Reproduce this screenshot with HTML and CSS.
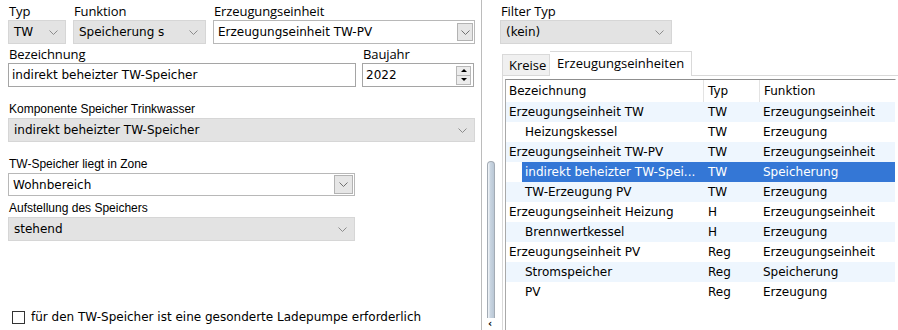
FILE: index.html
```html
<!DOCTYPE html>
<html>
	<head>
		<meta charset="utf-8">
		<title>Speicher</title>
		<link rel="stylesheet" href="styles.css">
	</head>
	<body>
	  <div class="app">
	    <div class="left">
	      <div class="row">
	        <div class="field w-typ">
	          <div class="lbl">Typ</div>
	          <div class="combo ro">TW<svg class="chev" width="9" height="5"><path d="M0.5 0.5 L4.5 4.5 L8.5 0.5"/></svg></div>
	        </div>
	        <div class="field w-funk">
	          <div class="lbl">Funktion</div>
	          <div class="combo ro">Speicherung s<svg class="chev" width="9" height="5"><path d="M0.5 0.5 L4.5 4.5 L8.5 0.5"/></svg></div>
	        </div>
	        <div class="field w-erz">
	          <div class="lbl">Erzeugungseinheit</div>
	          <div class="combo wb">Erzeugungseinheit TW-PV<span class="btn"><svg class="chev" width="9" height="5"><path d="M0.5 0.5 L4.5 4.5 L8.5 0.5"/></svg></span></div>
	        </div>
	      </div>

	      <div class="row r2">
	        <div class="field w-bez">
	          <div class="lbl">Bezeichnung</div>
	          <div class="input">indirekt beheizter TW-Speicher</div>
	        </div>
	        <div class="field w-bj">
	          <div class="lbl">Baujahr</div>
	          <div class="input spin">2022
	            <span class="spinbtns">
	              <span class="sb"><i class="up"></i></span>
	              <span class="sb"><i class="dn"></i></span>
	            </span>
	          </div>
	        </div>
	      </div>

	      <div class="field w-komp">
	        <div class="lbl arial">Komponente Speicher Trinkwasser</div>
	        <div class="combo ro">indirekt beheizter TW-Speicher<svg class="chev" width="9" height="5"><path d="M0.5 0.5 L4.5 4.5 L8.5 0.5"/></svg></div>
	      </div>

	      <div class="field w-zone">
	        <div class="lbl arial">TW-Speicher liegt in Zone</div>
	        <div class="combo wb short">Wohnbereich<span class="btn"><svg class="chev" width="9" height="5"><path d="M0.5 0.5 L4.5 4.5 L8.5 0.5"/></svg></span></div>
	      </div>

	      <div class="field w-auf">
	        <div class="lbl arial">Aufstellung des Speichers</div>
	        <div class="combo ro">stehend<svg class="chev" width="9" height="5"><path d="M0.5 0.5 L4.5 4.5 L8.5 0.5"/></svg></div>
	      </div>

	      <div class="check"><span class="box"></span>für den TW-Speicher ist eine gesonderte Ladepumpe erforderlich</div>
	    </div>

	    <div class="splitter">
	      <div class="thumb"></div>
	      <span class="arr">‹</span>
	    </div>

	    <div class="right">
	      <div class="field w-filter">
	        <div class="lbl">Filter Typ</div>
	        <div class="combo ro">(kein)<svg class="chev" width="9" height="5"><path d="M0.5 0.5 L4.5 4.5 L8.5 0.5"/></svg></div>
	      </div>

	      <div class="tabs">
	        <div class="tab">Kreise</div>
	        <div class="tab active">Erzeugungseinheiten</div>
	      </div>

	      <div class="pane">
	        <div class="tree">
	          <div class="thead">
	            <span class="c1">Bezeichnung</span><span class="c2">Typ</span><span class="c3">Funktion</span>
	          </div>
	          <div class="tr alt"><div class="item"><span class="c1">Erzeugungseinheit TW</span><span class="c2">TW</span><span class="c3">Erzeugungseinheit</span></div></div>
	          <div class="tr sub"><div class="item"><span class="c1">Heizungskessel</span><span class="c2">TW</span><span class="c3">Erzeugung</span></div></div>
	          <div class="tr alt"><div class="item"><span class="c1">Erzeugungseinheit TW-PV</span><span class="c2">TW</span><span class="c3">Erzeugungseinheit</span></div></div>
	          <div class="tr sub"><div class="item sel"><span class="c1">indirekt beheizter TW-Spei...</span><span class="c2">TW</span><span class="c3">Speicherung</span></div></div>
	          <div class="tr sub alt"><div class="item"><span class="c1">TW-Erzeugung PV</span><span class="c2">TW</span><span class="c3">Erzeugung</span></div></div>
	          <div class="tr"><div class="item"><span class="c1">Erzeugungseinheit Heizung</span><span class="c2">H</span><span class="c3">Erzeugungseinheit</span></div></div>
	          <div class="tr sub alt"><div class="item"><span class="c1">Brennwertkessel</span><span class="c2">H</span><span class="c3">Erzeugung</span></div></div>
	          <div class="tr"><div class="item"><span class="c1">Erzeugungseinheit PV</span><span class="c2">Reg</span><span class="c3">Erzeugungseinheit</span></div></div>
	          <div class="tr sub alt"><div class="item"><span class="c1">Stromspeicher</span><span class="c2">Reg</span><span class="c3">Speicherung</span></div></div>
	          <div class="tr sub"><div class="item"><span class="c1">PV</span><span class="c2">Reg</span><span class="c3">Erzeugung</span></div></div>
	        </div>
	      </div>
	    </div>
	  </div>
	</body>
</html>
```

FILE: styles.css
```css
body {
  margin: 0;
  background: #fff;
  color: #000;
  font-family: "DejaVu Sans", sans-serif;
  font-size: 12px;
}
.app {
  display: flex;
  height: 330px;
  overflow: hidden;
}

/* linke Seite */
.left {
  width: 482px;
  box-sizing: border-box;
  border-right: 1px solid #bcbcbc;
  padding: 3px 0 0 8px;
  display: flex;
  flex-direction: column;
}
.row { display: flex; gap: 7px; }
.row.r2 { margin-top: 2px; gap: 6px; }
.lbl {
  font-family: "Open Sans", sans-serif;
  font-size: 13px;
  line-height: 17px;
  height: 17px;
  padding-left: 1px;
  white-space: nowrap;
  letter-spacing: -0.1px;
}
.lbl.arial {
  font-family: "Liberation Sans", sans-serif;
  font-size: 12px;
  letter-spacing: 0;
}
.w-typ { width: 58px; }
.w-funk { width: 133px; }
.w-erz { width: 262px; }
.w-bez { width: 348px; }
.w-bj { width: 112px; }
.w-komp { width: 467px; margin-top: 14px; }
.w-zone { width: 347px; margin-top: 14px; }
.w-auf { width: 347px; margin-top: 4px; }
.w-filter { width: 172px; }

.combo, .input {
  height: 24px;
  box-sizing: border-box;
  display: flex;
  align-items: center;
  justify-content: space-between;
  white-space: nowrap;
  overflow: hidden;
}
.combo.ro {
  background: #e3e3e3;
  border: 1px solid #d6d6d6;
  padding: 0 7px 0 5px;
}
.combo.wb {
  background: #fff;
  border: 1px solid #b8b8b8;
  padding: 0 1px 0 4px;
}
.combo.short { height: 23px; }
.chev { display: block; }
.chev path { fill: none; stroke: #8c8c8c; stroke-width: 1; }
.btn {
  width: 16px;
  height: 18px;
  box-sizing: border-box;
  background: #e6e6e6;
  border: 1px solid #b3b3b3;
  display: flex;
  align-items: center;
  justify-content: center;
}
.combo.short .btn { width: 19px; height: 19px; }
.btn .chev path { stroke: #707070; }

.input {
  background: #fff;
  border: 1px solid #a5a5a5;
  padding: 0 2px 0 3px;
}
.spinbtns {
  width: 15px;
  height: 19px;
  box-sizing: border-box;
  border: 1px solid #b8b8b8;
  display: flex;
  flex-direction: column;
}
.sb {
  flex: 1;
  background: #ececec;
  display: flex;
  align-items: center;
  justify-content: center;
}
.sb + .sb { border-top: 1px solid #b8b8b8; }
.sb i { width: 0; height: 0; border-left: 3px solid transparent; border-right: 3px solid transparent; }
.sb .up { border-bottom: 3px solid #000; }
.sb .dn { border-top: 3px solid #000; }

.check {
  margin-top: auto;
  margin-left: 4px;
  margin-bottom: 5px;
  line-height: 16px;
  display: flex;
  align-items: center;
  white-space: nowrap;
}
.check .box {
  width: 13px;
  height: 13px;
  box-sizing: border-box;
  border: 1px solid #333;
  margin-right: 6px;
}

/* Splitter */
.splitter {
  width: 18px;
  display: flex;
  flex-direction: column;
  align-items: flex-start;
}
.thumb {
  margin: 161px 0 0 5px;
  width: 8px;
  flex: 1;
  box-sizing: border-box;
  border: 1px solid #a3abb4;
  border-bottom: none;
  border-radius: 4px 4px 0 0;
  background: linear-gradient(to right, #f4f7fa, #c9d5e1 40%, #b9c7d5);
}
.arr {
  margin: 1px 0 1px 6px;
  font-family: "DejaVu Sans", sans-serif;
  font-size: 10px;
  line-height: 10px;
  height: 10px;
  font-weight: bold;
}

/* rechte Seite */
.right {
  flex: 1;
  padding-top: 3px;
  display: flex;
  flex-direction: column;
  min-width: 0;
}
.tabs {
  display: flex;
  margin: 7px 0 0 2px;
  height: 24px;
  align-items: flex-end;
  position: relative;
  z-index: 1;
}
.tab {
  font-family: "Open Sans", sans-serif;
  font-size: 13px;
  height: 21px;
  line-height: 21px;
  box-sizing: border-box;
  padding: 0 6px;
  background: #f0f0f0;
  border: 1px solid #d9d9d9;
  border-bottom: none;
  width: 48px;
}
.tab.active {
  background: #fff;
  height: 25px;
  line-height: 22px;
  margin-bottom: -1px;
  width: 142px;
  padding-left: 7px;
  border-left: none;
}
.pane {
  flex: none;
  height: 270px;
  margin-left: 2px;
  box-sizing: border-box;
  border: 1px solid #d9d9d9;
  border-right: none;
  padding: 3px 2px 0 2px;
}
.tree {
  height: 300px;
  border-left: 1px solid #a9a9a9;
  border-top: 1px solid #8f8f8f;
  border-right: 1px solid transparent;
}
.thead {
  display: flex;
  height: 22px;
  line-height: 22px;
}
.thead span { padding-left: 3px; box-sizing: border-box; }
.thead .c2, .thead .c3 { border-left: 1px solid #e3e3e3; padding-left: 4px; }
.c1 { width: 197px; box-sizing: border-box; overflow: hidden; white-space: nowrap; }
.c2 { width: 56px; box-sizing: border-box; padding-left: 5px; }
.c3 { flex: 1; padding-left: 4px; }
.tr {
  display: flex;
  height: 20px;
  line-height: 20px;
}
.tr.alt { background: #eef6fe; }
.tr.sub { padding-left: 16px; }
.item { display: flex; flex: 1; }
.item .c1 { padding-left: 3px; }
.tr.sub .c1 { width: 181px; }
.item.sel { background: #3477d6; color: #fff; }
```
